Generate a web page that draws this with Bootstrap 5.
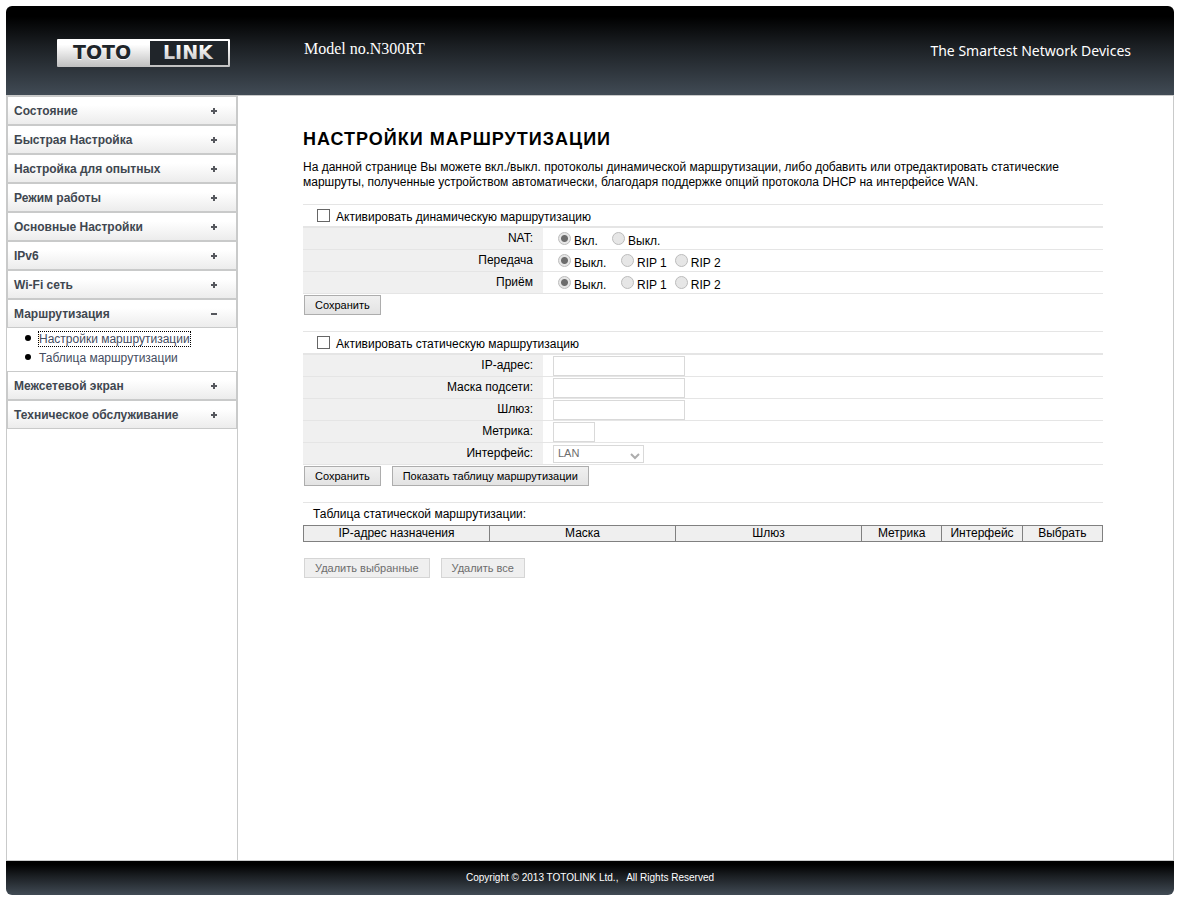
<!DOCTYPE html>
<html lang="ru">
<head>
<meta charset="utf-8">
<meta name="viewport" content="width=device-width, initial-scale=1">
<title>TOTOLINK N300RT</title>
<link href="https://cdn.jsdelivr.net/npm/bootstrap@5.3.0/dist/css/bootstrap.min.css" rel="stylesheet">
<style>
  body { font-family: "Liberation Sans", Arial, sans-serif; font-size: 12px; line-height: 15px; color: #000; background: #fff; }
  .shell { padding: 6px 6px 5px; }
  .site-head { height: 89px; border-radius: 6px 6px 0 0; background: linear-gradient(#000 12%, #1b1f23 45%, #414b55); color: #fff; padding: 0 43px 0 50px; }
  .logo-box { width: 248px; }
  .model { font: 16px/20px "Liberation Serif", "Times New Roman", serif; padding-bottom: 4px; }
  .slogan { font: 14px/20px "Noto Sans", sans-serif; }
  .frame { border: 1px solid #c9caca; }
  .side { width: 231px; border-right: 1px solid #c9caca; }
  .menu-btn { height: 29px; padding: 1px 19px 0 6px; border: 1px solid #c9caca; background: linear-gradient(#fff 30%, #ececec); color: #3f4750; font-weight: 700; font-size: 12px; text-align: left; }
  .sub-menu { height: 43px; margin: 0; padding: 2px 0 0 32px; font-size: 12px; line-height: 19px; list-style: none; }
  .sub-menu li { position: relative; }
  .sub-menu li::before { content: ""; position: absolute; left: -14px; top: 5px; width: 6px; height: 6px; border-radius: 50%; background: #000; }
  .sub-menu a { color: #444c60; text-decoration: none; }
  .sub-menu a.active { outline: 1px dotted #000; }
  .page-main { padding: 32px 20px 20px 65px; }
  .inner { max-width: 800px; }
  h1 { font-size: 18px; line-height: 22px; font-weight: 700; letter-spacing: 1px; margin: 0 0 10px; }
  .intro { margin: 0 0 14px; }
  .block { border-top: 1px solid #e5e5e5; margin-bottom: 16px; }
  .block-head { height: 23px; padding: 0 0 0 14px; border-bottom: 2px solid #e5e5e5; gap: 6px; }
  .block-head label { padding-top: 4px; }
  .line { height: 22px; border-bottom: 1px solid #e5e5e5; }
  .name { width: 240px; padding: 3px 10px 0 0; background: #f0f0f0; text-align: right; }
  .value { padding-left: 15px; }
  .control { padding-left: 10px; }
  .opt { gap: 3px; }
  .opt label { padding-top: 5px; }
  .first-opt { min-width: 51px; }
  .nat-opt { min-width: 54px; }
  input[type=checkbox], input[type=radio] { appearance: none; width: 13px; height: 13px; margin: 0; flex: none; background: #fff; border: 1px solid #666; }
  input[type=radio] { border: 1px solid #bcbcbc; border-radius: 50%; background: #e6e6e6; }
  input[type=radio]:checked { background: radial-gradient(circle, #6d6d6d 3px, #e6e6e6 4px); }
  .field { height: 20px; width: 132px; border: 1px solid #d9d9d9; background: #fff; padding: 0 4px; font-size: 11px; }
  .field-short { width: 42px; }
  select.field { width: 91px; height: 18px; color: #6d6d6d; appearance: none; }
  .pick { position: relative; }
  .pick svg { position: absolute; right: 4px; bottom: 3px; pointer-events: none; }
  .cmd { height: 20px; padding: 0 10px; border: 1px solid #adadad; background: linear-gradient(#f0f0f0, #e3e3e3); color: #000; font-size: 11px; line-height: 16px; }
  .cmd:disabled { border-color: #d5d5d5; background: #efefef; color: #6d6d6d; }
  .cmds { padding: 1px 1px 0; gap: 11px; }
  .caption-line { padding: 4px 10px 3px; }
  .routes { width: 100%; table-layout: fixed; border-collapse: collapse; margin-bottom: 15px; }
  .routes th { border: 1px solid #808080; background: #efefef; font-weight: 400; text-align: center; padding: 0; }
  .wide { width: 186px; }
  .site-foot { height: 34px; border-radius: 0 0 6px 6px; background: linear-gradient(#000 10%, #1b1f23 45%, #414b55); color: #fff; font-size: 10px; line-height: 12px; }
</style>
</head>
<body>
<div class="shell d-flex flex-column min-vh-100">
  <header class="site-head d-flex justify-content-between align-items-center">
    <div class="d-flex align-items-center">
      <div class="logo-box">
        <svg class="d-block mt-1" width="176" height="31" viewBox="0 0 176 31" role="img" aria-label="TOTOLINK">
          <defs>
            <linearGradient id="silver" x1="0" y1="0" x2="0" y2="1"><stop offset=".2" stop-color="#fff"/><stop offset="1" stop-color="#bfbfbf"/></linearGradient>
          </defs>
          <rect x="1" y="2" width="173" height="28" rx="1" fill="url(#silver)"/>
          <rect x="94" y="4" width="78" height="24" fill="#20252a"/>
          <text x="17" y="23" font-family="DejaVu Sans" font-weight="700" font-size="19" fill="#fff">TOTO</text>
          <text x="17" y="22" font-family="DejaVu Sans" font-weight="700" font-size="19" fill="#20252a">TOTO</text>
          <text x="107" y="22" font-family="DejaVu Sans" font-weight="700" font-size="19" fill="url(#silver)">LINK</text>
        </svg>
      </div>
      <div class="model">Model no.N300RT</div>
    </div>
    <div class="slogan">The Smartest Network Devices</div>
  </header>

  <div class="frame d-flex flex-grow-1">
    <nav class="side flex-shrink-0" aria-label="Меню">
      <button type="button" class="menu-btn w-100 d-flex align-items-center justify-content-between">Состояние<svg width="6" height="6"><path d="M0 3h6M3 0v6" stroke="#55575d" stroke-width="2"/></svg></button>
      <button type="button" class="menu-btn w-100 d-flex align-items-center justify-content-between">Быстрая Настройка<svg width="6" height="6"><path d="M0 3h6M3 0v6" stroke="#55575d" stroke-width="2"/></svg></button>
      <button type="button" class="menu-btn w-100 d-flex align-items-center justify-content-between">Настройка для опытных<svg width="6" height="6"><path d="M0 3h6M3 0v6" stroke="#55575d" stroke-width="2"/></svg></button>
      <button type="button" class="menu-btn w-100 d-flex align-items-center justify-content-between">Режим работы<svg width="6" height="6"><path d="M0 3h6M3 0v6" stroke="#55575d" stroke-width="2"/></svg></button>
      <button type="button" class="menu-btn w-100 d-flex align-items-center justify-content-between">Основные Настройки<svg width="6" height="6"><path d="M0 3h6M3 0v6" stroke="#55575d" stroke-width="2"/></svg></button>
      <button type="button" class="menu-btn w-100 d-flex align-items-center justify-content-between">IPv6<svg width="6" height="6"><path d="M0 3h6M3 0v6" stroke="#55575d" stroke-width="2"/></svg></button>
      <button type="button" class="menu-btn w-100 d-flex align-items-center justify-content-between">Wi-Fi сеть<svg width="6" height="6"><path d="M0 3h6M3 0v6" stroke="#55575d" stroke-width="2"/></svg></button>
      <button type="button" class="menu-btn w-100 d-flex align-items-center justify-content-between" aria-expanded="true">Маршрутизация<svg width="6" height="6"><path d="M0 3h6" stroke="#55575d" stroke-width="2"/></svg></button>
      <ul class="sub-menu">
        <li><a href="#" class="active">Настройки маршрутизации</a></li>
        <li><a href="#">Таблица маршрутизации</a></li>
      </ul>
      <button type="button" class="menu-btn w-100 d-flex align-items-center justify-content-between">Межсетевой экран<svg width="6" height="6"><path d="M0 3h6M3 0v6" stroke="#55575d" stroke-width="2"/></svg></button>
      <button type="button" class="menu-btn w-100 d-flex align-items-center justify-content-between">Техническое обслуживание<svg width="6" height="6"><path d="M0 3h6M3 0v6" stroke="#55575d" stroke-width="2"/></svg></button>
    </nav>

    <main class="page-main flex-grow-1">
      <div class="inner">
        <h1>НАСТРОЙКИ МАРШРУТИЗАЦИИ</h1>
        <p class="intro">На данной странице Вы можете вкл./выкл. протоколы динамической маршрутизации, либо добавить или отредактировать статические маршруты, полученные устройством автоматически, благодаря поддержке опций протокола DHCP на интерфейсе WAN.</p>

        <form class="block">
          <div class="block-head d-flex align-items-center">
            <input type="checkbox" id="dyn"><label for="dyn">Активировать динамическую маршрутизацию</label>
          </div>
          <div class="line d-flex" role="radiogroup" aria-labelledby="nat">
            <div class="name" id="nat">NAT:</div>
            <div class="value d-flex align-items-center">
              <div class="opt nat-opt d-flex align-items-center"><input type="radio" name="nat" id="nat1" checked disabled><label for="nat1">Вкл.</label></div>
              <div class="opt d-flex align-items-center"><input type="radio" name="nat" id="nat0" disabled><label for="nat0">Выкл.</label></div>
            </div>
          </div>
          <div class="line d-flex" role="radiogroup" aria-labelledby="tx">
            <div class="name" id="tx">Передача</div>
            <div class="value d-flex align-items-center gap-2">
              <div class="opt d-flex align-items-center first-opt me-1"><input type="radio" name="tx" id="tx0" checked disabled><label for="tx0">Выкл.</label></div>
              <div class="opt d-flex align-items-center"><input type="radio" name="tx" id="tx1" disabled><label for="tx1">RIP 1</label></div>
              <div class="opt d-flex align-items-center"><input type="radio" name="tx" id="tx2" disabled><label for="tx2">RIP 2</label></div>
            </div>
          </div>
          <div class="line d-flex" role="radiogroup" aria-labelledby="rx">
            <div class="name" id="rx">Приём</div>
            <div class="value d-flex align-items-center gap-2">
              <div class="opt d-flex align-items-center first-opt me-1"><input type="radio" name="rx" id="rx0" checked disabled><label for="rx0">Выкл.</label></div>
              <div class="opt d-flex align-items-center"><input type="radio" name="rx" id="rx1" disabled><label for="rx1">RIP 1</label></div>
              <div class="opt d-flex align-items-center"><input type="radio" name="rx" id="rx2" disabled><label for="rx2">RIP 2</label></div>
            </div>
          </div>
          <div class="cmds d-flex"><button type="button" class="cmd">Сохранить</button></div>
        </form>

        <form class="block">
          <div class="block-head d-flex align-items-center">
            <input type="checkbox" id="stat"><label for="stat">Активировать статическую маршрутизацию</label>
          </div>
          <div class="line d-flex"><label class="name" for="ip">IP-адрес:</label><div class="control d-flex align-items-end"><input type="text" class="field" id="ip" disabled></div></div>
          <div class="line d-flex"><label class="name" for="mask">Маска подсети:</label><div class="control d-flex align-items-end"><input type="text" class="field" id="mask" disabled></div></div>
          <div class="line d-flex"><label class="name" for="gw">Шлюз:</label><div class="control d-flex align-items-end"><input type="text" class="field" id="gw" disabled></div></div>
          <div class="line d-flex"><label class="name" for="metric">Метрика:</label><div class="control d-flex align-items-end"><input type="text" class="field field-short" id="metric" disabled></div></div>
          <div class="line d-flex"><label class="name" for="iface">Интерфейс:</label>
            <div class="control pick d-flex align-items-center">
              <select class="field" id="iface" disabled><option>LAN</option><option>WAN</option></select>
              <svg width="10" height="8"><path d="M1 1l4 4 4-4" fill="none" stroke="#adadad" stroke-width="2"/></svg>
            </div>
          </div>
          <div class="cmds d-flex">
            <button type="button" class="cmd">Сохранить</button>
            <button type="button" class="cmd">Показать таблицу маршрутизации</button>
          </div>
        </form>

        <form class="block">
          <div class="caption-line" id="cap">Таблица статической маршрутизации:</div>
          <table class="routes" aria-labelledby="cap">
            <thead><tr><th class="wide">IP-адрес назначения</th><th class="wide">Маска</th><th class="wide">Шлюз</th><th>Метрика</th><th>Интерфейс</th><th>Выбрать</th></tr></thead>
          </table>
          <div class="cmds d-flex">
            <button type="button" class="cmd" disabled>Удалить выбранные</button>
            <button type="button" class="cmd" disabled>Удалить все</button>
          </div>
        </form>
      </div>
    </main>
  </div>

  <footer class="site-foot d-flex align-items-center justify-content-center">Copyright © 2013 TOTOLINK Ltd.,&nbsp;&nbsp; All Rights Reserved</footer>
</div>
<script src="https://cdn.jsdelivr.net/npm/bootstrap@5.3.0/dist/js/bootstrap.bundle.min.js"></script>
</body>
</html>
